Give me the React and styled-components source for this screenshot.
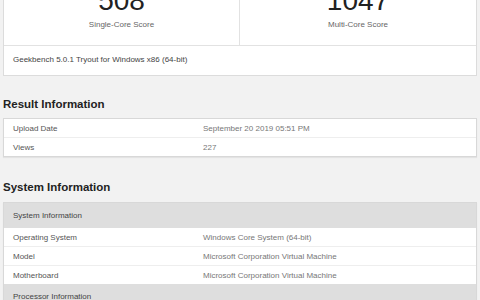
import styled, { createGlobalStyle } from "styled-components";

const GlobalStyle = createGlobalStyle`
  html, body {
    margin: 0;
    padding: 0;
    background: #f2f2f2;
    font-family: "Liberation Sans", Arial, sans-serif;
    color: #333;
    overflow: hidden;
  }
`;

const Page = styled.div`
  width: 474px;
  margin: -23px 0 0 3px;
`;

const Card = styled.div`
  background: #fff;
  border: 1px solid #dcdcdc;
`;

const Scores = styled.div`
  display: grid;
  grid-template-columns: 1fr 1fr;
  border-bottom: 1px solid #e2e2e2;
`;

const Score = styled.div`
  text-align: center;
  padding: 8px 0 16px;
  border-right: ${(p) => (p.last ? "none" : "1px solid #e2e2e2")};
`;

const Number = styled.div`
  font-size: 28px;
  line-height: 30px;
  font-weight: 300;
  color: #222;
`;

const ScoreLabel = styled.div`
  font-size: 8px;
  color: #666;
  margin-top: 4px;
`;

const Version = styled.div`
  font-size: 8px;
  color: #444;
  padding: 9px 9px 11px;
`;

const Heading = styled.h2`
  font-size: 11.5px;
  font-weight: bold;
  color: #222;
  margin: ${(p) => (p.wide ? "24px 0 9px" : "22px 0 8px")};
`;

const Table = styled.div`
  background: #fff;
  border: 1px solid #d8d8d8;
  box-shadow: 0 1px 1px rgba(0, 0, 0, 0.06);
`;

const Row = styled.div`
  display: grid;
  grid-template-columns: 190px 1fr;
  height: 18px;
  align-items: center;
  padding: 0 9px;
  font-size: 8px;
  color: #555;
  border-top: ${(p) => (p.first ? "none" : "1px solid #eee")};
`;

const Value = styled.span`
  color: #777;
`;

const SectionHead = styled.div`
  background: #dedede;
  height: 25px;
  display: flex;
  align-items: center;
  padding: 0 9px;
  font-size: 8px;
  color: #444;
`;

export default function App() {
  return (
    <>
      <GlobalStyle />
      <Page>
        <Card>
          <Scores>
            <Score>
              <Number>508</Number>
              <ScoreLabel>Single-Core Score</ScoreLabel>
            </Score>
            <Score last>
              <Number>1047</Number>
              <ScoreLabel>Multi-Core Score</ScoreLabel>
            </Score>
          </Scores>
          <Version>Geekbench 5.0.1 Tryout for Windows x86 (64-bit)</Version>
        </Card>

        <Heading>Result Information</Heading>
        <Table>
          <Row first>
            <span>Upload Date</span>
            <Value>September 20 2019 05:51 PM</Value>
          </Row>
          <Row>
            <span>Views</span>
            <Value>227</Value>
          </Row>
        </Table>

        <Heading wide>System Information</Heading>
        <Table>
          <SectionHead>System Information</SectionHead>
          <Row first>
            <span>Operating System</span>
            <Value>Windows Core System (64-bit)</Value>
          </Row>
          <Row>
            <span>Model</span>
            <Value>Microsoft Corporation Virtual Machine</Value>
          </Row>
          <Row>
            <span>Motherboard</span>
            <Value>Microsoft Corporation Virtual Machine</Value>
          </Row>
          <SectionHead>Processor Information</SectionHead>
        </Table>
      </Page>
    </>
  );
}
